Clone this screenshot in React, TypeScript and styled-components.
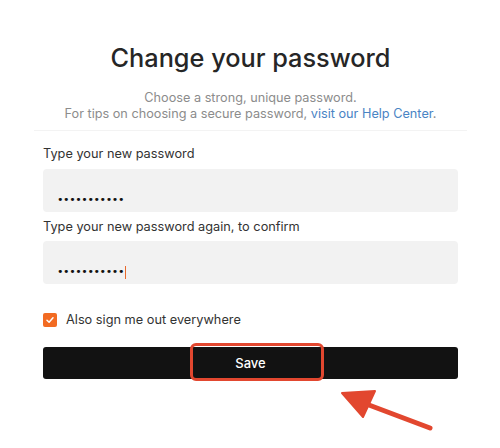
import React from "react";
import styled, { createGlobalStyle } from "styled-components";

const Global = createGlobalStyle`
  html, body { margin: 0; padding: 0; background: #ffffff; }
  body { font-family: Inter, "Noto Sans", "Liberation Sans", sans-serif; -webkit-font-smoothing: antialiased; }
  * { box-sizing: border-box; }
`;

const Page = styled.div`
  width: 500px;
  height: 448px;
  padding: 43px 42px 0 43px;
  overflow: hidden;
  position: relative;
`;

const Header = styled.header`
  display: flex;
  flex-direction: column;
  align-items: center;
  text-align: center;
`;

const Title = styled.h1`
  margin: 0;
  font-size: 25.3px;
  line-height: 30px;
  font-weight: 500;
  color: #262626;
  letter-spacing: 0;
`;

const Subtitle = styled.p`
  margin: 17px 0 0;
  font-size: 12.7px;
  line-height: 16px;
  color: #8c8c8c;
`;

const Link = styled.a`
  color: #4a84c4;
  text-decoration: none;
`;

const Divider = styled.hr`
  border: 0;
  height: 1px;
  background: #f3f3f3;
  margin: 8px -9px 0;
`;

const Form = styled.form`
  display: flex;
  flex-direction: column;
  margin-top: 14px;
`;

const Label = styled.label<{ $gap?: number }>`
  font-size: 12.75px;
  line-height: 18px;
  color: #333333;
  margin-bottom: ${(p) => p.$gap ?? 5}px;
`;

const Field = styled.div<{ $after?: number }>`
  height: 43px;
  background: #f2f2f2;
  border-radius: 4px;
  padding: 19px 14px 0;
  display: flex;
  align-items: center;
  margin-bottom: ${(p) => p.$after ?? 0}px;
`;

const Dots = styled.span`
  font-family: "DejaVu Sans", sans-serif;
  font-size: 11px;
  line-height: 12px;
  letter-spacing: -0.4px;
  color: #111111;
`;

const Caret = styled.span`
  display: inline-block;
  width: 1px;
  height: 13px;
  background: #e8692c;
  margin-left: 1px;
`;

const CheckRow = styled.div`
  display: flex;
  align-items: center;
  gap: 9px;
  margin-top: 28px;
`;

const Box = styled.span`
  width: 14px;
  height: 14px;
  border-radius: 2px;
  background: #f26b22;
  display: flex;
  align-items: center;
  justify-content: center;
`;

const CheckText = styled.span`
  font-size: 12.75px;
  line-height: 16px;
  color: #333333;
`;

const ButtonWrap = styled.div`
  position: relative;
  margin-top: 19px;
`;

const SaveButton = styled.button`
  width: 100%;
  height: 32px;
  border: 0;
  border-radius: 3px;
  background: #121212;
  color: #ffffff;
  font-family: Inter, "Liberation Sans", sans-serif;
  font-size: 13px;
  font-weight: 500;
  cursor: pointer;
`;

const Highlight = styled.span`
  position: absolute;
  left: 147px;
  top: -4px;
  width: 134px;
  height: 38px;
  border: 3.5px solid #e2472f;
  border-radius: 6px;
  pointer-events: none;
`;

const Arrow = styled.svg`
  position: absolute;
  left: 290px;
  top: 40px;
  overflow: visible;
`;

export default function App() {
  return (
    <>
      <Global />
      <Page>
        <Header>
          <Title>Change your password</Title>
          <Subtitle>
            Choose a strong, unique password.
            <br />
            For tips on choosing a secure password, <Link href="#">visit our Help Center</Link>.
          </Subtitle>
        </Header>
        <Divider />
        <Form onSubmit={(e) => e.preventDefault()}>
          <Label $gap={6}>Type your new password</Label>
          <Field $after={6}>
            <Dots>•••••••••••</Dots>
          </Field>
          <Label $gap={5}>Type your new password again, to confirm</Label>
          <Field>
            <Dots>•••••••••••</Dots>
            <Caret />
          </Field>
          <CheckRow>
            <Box>
              <svg width="10" height="10" viewBox="0 0 10 10">
                <path d="M2 5.2 L4.1 7.2 L8 2.8" fill="none" stroke="#fff" strokeWidth="1.5" strokeLinecap="round" strokeLinejoin="round" />
              </svg>
            </Box>
            <CheckText>Also sign me out everywhere</CheckText>
          </CheckRow>
          <ButtonWrap>
            <SaveButton type="submit">Save</SaveButton>
            <Highlight />
            <Arrow width="100" height="60" viewBox="0 0 100 60">
              <line x1="97" y1="41" x2="20" y2="12" stroke="#e2472f" strokeWidth="5" strokeLinecap="round" />
              <polygon points="9,6 42,4 30,30" fill="#e2472f" strokeLinejoin="round" stroke="#e2472f" strokeWidth="2" />
            </Arrow>
          </ButtonWrap>
        </Form>
      </Page>
    </>
  );
}
